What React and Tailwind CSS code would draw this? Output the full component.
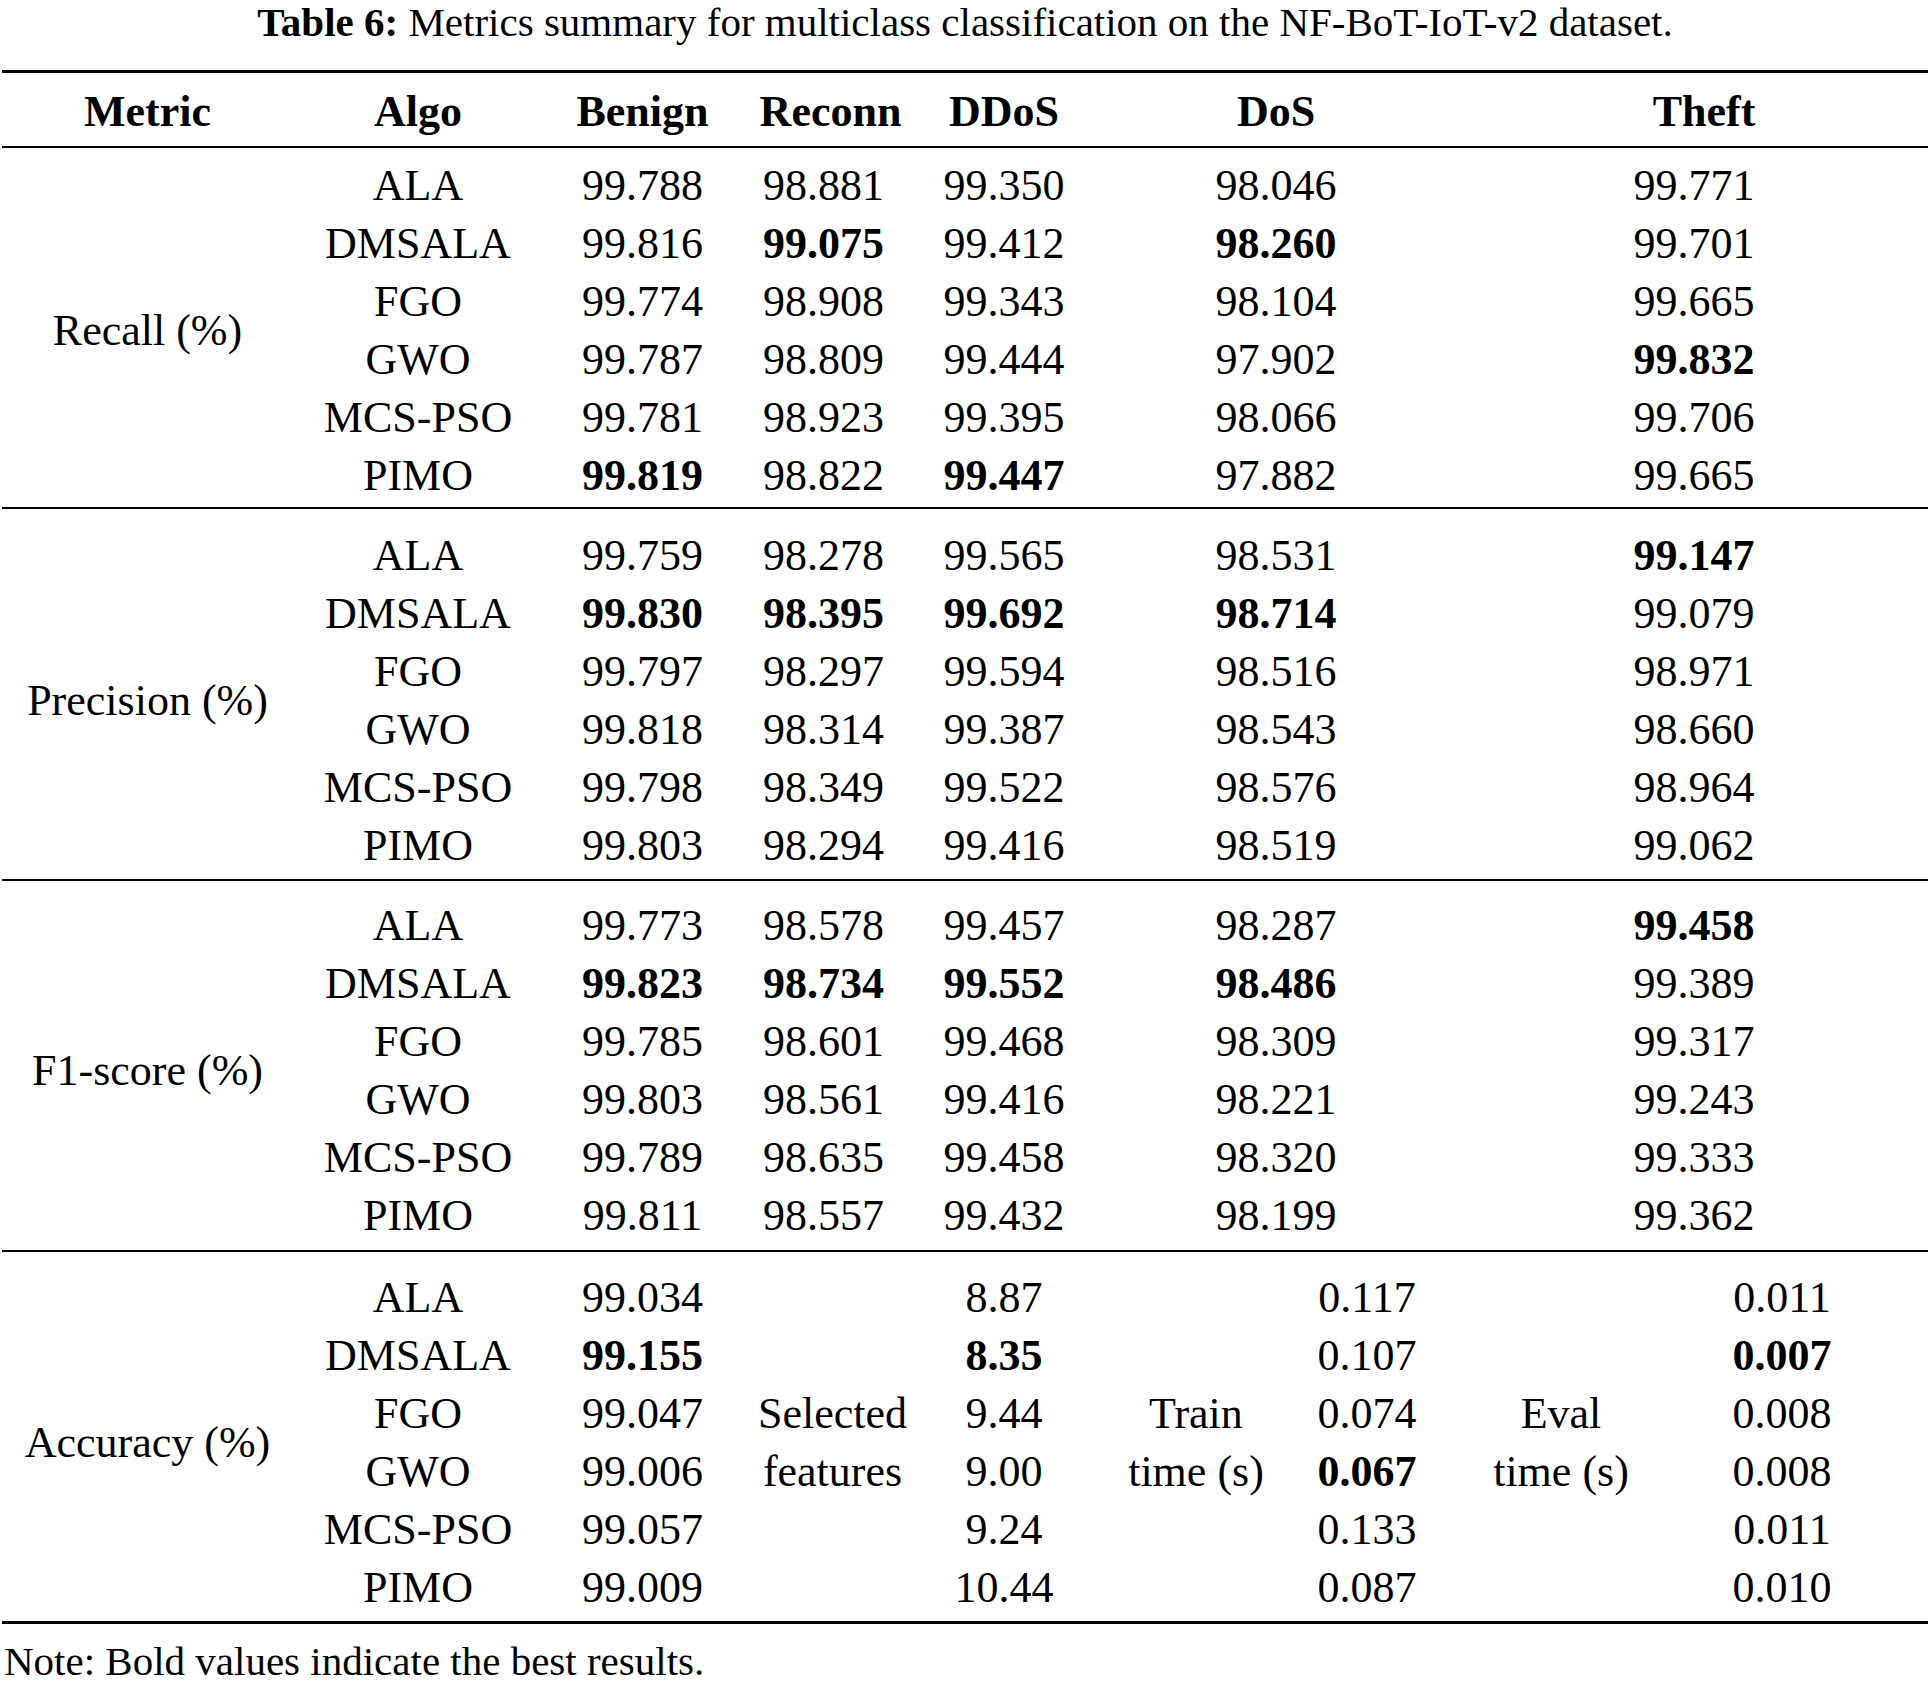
const sections = [
  {
    label: "Recall (%)",
    pad: "pt-[9px] pb-[2px]",
    rows: [
      ["ALA", "99.788", "98.881", "99.350", "98.046", "99.771"],
      ["DMSALA", "99.816", "*99.075", "99.412", "*98.260", "99.701"],
      ["FGO", "99.774", "98.908", "99.343", "98.104", "99.665"],
      ["GWO", "99.787", "98.809", "99.444", "97.902", "*99.832"],
      ["MCS-PSO", "99.781", "98.923", "99.395", "98.066", "99.706"],
      ["PIMO", "*99.819", "98.822", "*99.447", "97.882", "99.665"],
    ],
  },
  {
    label: "Precision (%)",
    pad: "pt-[18px] pb-[4px]",
    rows: [
      ["ALA", "99.759", "98.278", "99.565", "98.531", "*99.147"],
      ["DMSALA", "*99.830", "*98.395", "*99.692", "*98.714", "99.079"],
      ["FGO", "99.797", "98.297", "99.594", "98.516", "98.971"],
      ["GWO", "99.818", "98.314", "99.387", "98.543", "98.660"],
      ["MCS-PSO", "99.798", "98.349", "99.522", "98.576", "98.964"],
      ["PIMO", "99.803", "98.294", "99.416", "98.519", "99.062"],
    ],
  },
  {
    label: "F1-score (%)",
    pad: "pt-[16px] pb-[5px]",
    rows: [
      ["ALA", "99.773", "98.578", "99.457", "98.287", "*99.458"],
      ["DMSALA", "*99.823", "*98.734", "*99.552", "*98.486", "99.389"],
      ["FGO", "99.785", "98.601", "99.468", "98.309", "99.317"],
      ["GWO", "99.803", "98.561", "99.416", "98.221", "99.243"],
      ["MCS-PSO", "99.789", "98.635", "99.458", "98.320", "99.333"],
      ["PIMO", "99.811", "98.557", "99.432", "98.199", "99.362"],
    ],
  },
];

const accuracy = [
  ["ALA", "99.034", "8.87", "0.117", "0.011"],
  ["DMSALA", "*99.155", "*8.35", "0.107", "*0.007"],
  ["FGO", "99.047", "9.44", "0.074", "0.008"],
  ["GWO", "99.006", "9.00", "*0.067", "0.008"],
  ["MCS-PSO", "99.057", "9.24", "0.133", "0.011"],
  ["PIMO", "99.009", "10.44", "0.087", "0.010"],
];

const cols =
  "grid grid-cols-[295px_246px_203px_159px_202px_182px_160px_228px_214px_1fr]";

function Val({ v, className = "" }) {
  const bold = v.startsWith("*");
  return (
    <div className={`text-center ${bold ? "font-bold" : ""} ${className}`}>
      {bold ? v.slice(1) : v}
    </div>
  );
}

function Section({ label, pad, rows }) {
  return (
    <div className={`${cols} grid-rows-[repeat(6,58px)] ${pad}`}>
      <div className="col-start-1 row-start-1 row-span-6 flex items-center justify-center">
        {label}
      </div>
      {rows.map((r) => (
        <>
          <div className="col-start-2 text-center">{r[0]}</div>
          <Val v={r[1]} className="col-start-3" />
          <Val v={r[2]} className="col-start-4" />
          <Val v={r[3]} className="col-start-5" />
          <Val v={r[4]} className="col-start-6 col-span-2" />
          <Val v={r[5]} className="col-start-8 col-span-3 pl-[11px]" />
        </>
      ))}
    </div>
  );
}

export default function App() {
  return (
    <div className="w-[1930px] h-[1685px] overflow-hidden bg-white text-black font-['Liberation_Serif',serif]">
      {/* caption */}
      <div className="h-[40px] text-[41px] leading-[45px] text-center">
        <span className="font-bold">Table 6:</span> Metrics summary for multiclass
        classification on the NF-BoT-IoT-v2 dataset.
      </div>

      <div className="text-[44px] leading-[58px]">
        <div className="mt-[30px] mx-[2px] h-[3px] bg-black" />

        <div className={`${cols} h-[73px] pt-[5px] items-center font-bold`}>
          <div className="text-center">Metric</div>
          <div className="text-center">Algo</div>
          <div className="text-center">Benign</div>
          <div className="text-center pl-[14px]">Reconn</div>
          <div className="text-center">DDoS</div>
          <div className="col-span-2 text-center">DoS</div>
          <div className="col-span-3 text-center pl-[31px]">Theft</div>
        </div>

        <div className="mx-[2px] h-[2px] bg-black" />
        <Section {...sections[0]} />
        <div className="mx-[2px] h-[2px] bg-black" />
        <Section {...sections[1]} />
        <div className="mx-[2px] h-[2px] bg-black" />
        <Section {...sections[2]} />
        <div className="mx-[2px] h-[2px] bg-black" />

        {/* accuracy block, with the extra timing columns */}
        <div className={`${cols} grid-rows-[repeat(6,58px)] pt-[17px] pb-[4px]`}>
          <div className="col-start-1 row-start-1 row-span-6 flex items-center justify-center">
            Accuracy (%)
          </div>
          <div className="col-start-4 row-start-1 row-span-6 flex items-center justify-center text-center pl-[18px]">
            Selected<br />features
          </div>
          <div className="col-start-6 row-start-1 row-span-6 flex items-center justify-center text-center">
            Train<br />time (s)
          </div>
          <div className="col-start-8 row-start-1 row-span-6 flex items-center justify-center text-center">
            Eval<br />time (s)
          </div>
          {accuracy.map((r) => (
            <>
              <div className="col-start-2 text-center">{r[0]}</div>
              <Val v={r[1]} className="col-start-3" />
              <Val v={r[2]} className="col-start-5" />
              <Val v={r[3]} className="col-start-7" />
              <Val v={r[4]} className="col-start-9" />
            </>
          ))}
        </div>

        <div className="mx-[2px] h-[3px] bg-black" />
      </div>

      <div className="mt-[17px] pl-[4px] text-[41px] leading-[40px]">
        Note: Bold values indicate the best results.
      </div>
    </div>
  );
}
